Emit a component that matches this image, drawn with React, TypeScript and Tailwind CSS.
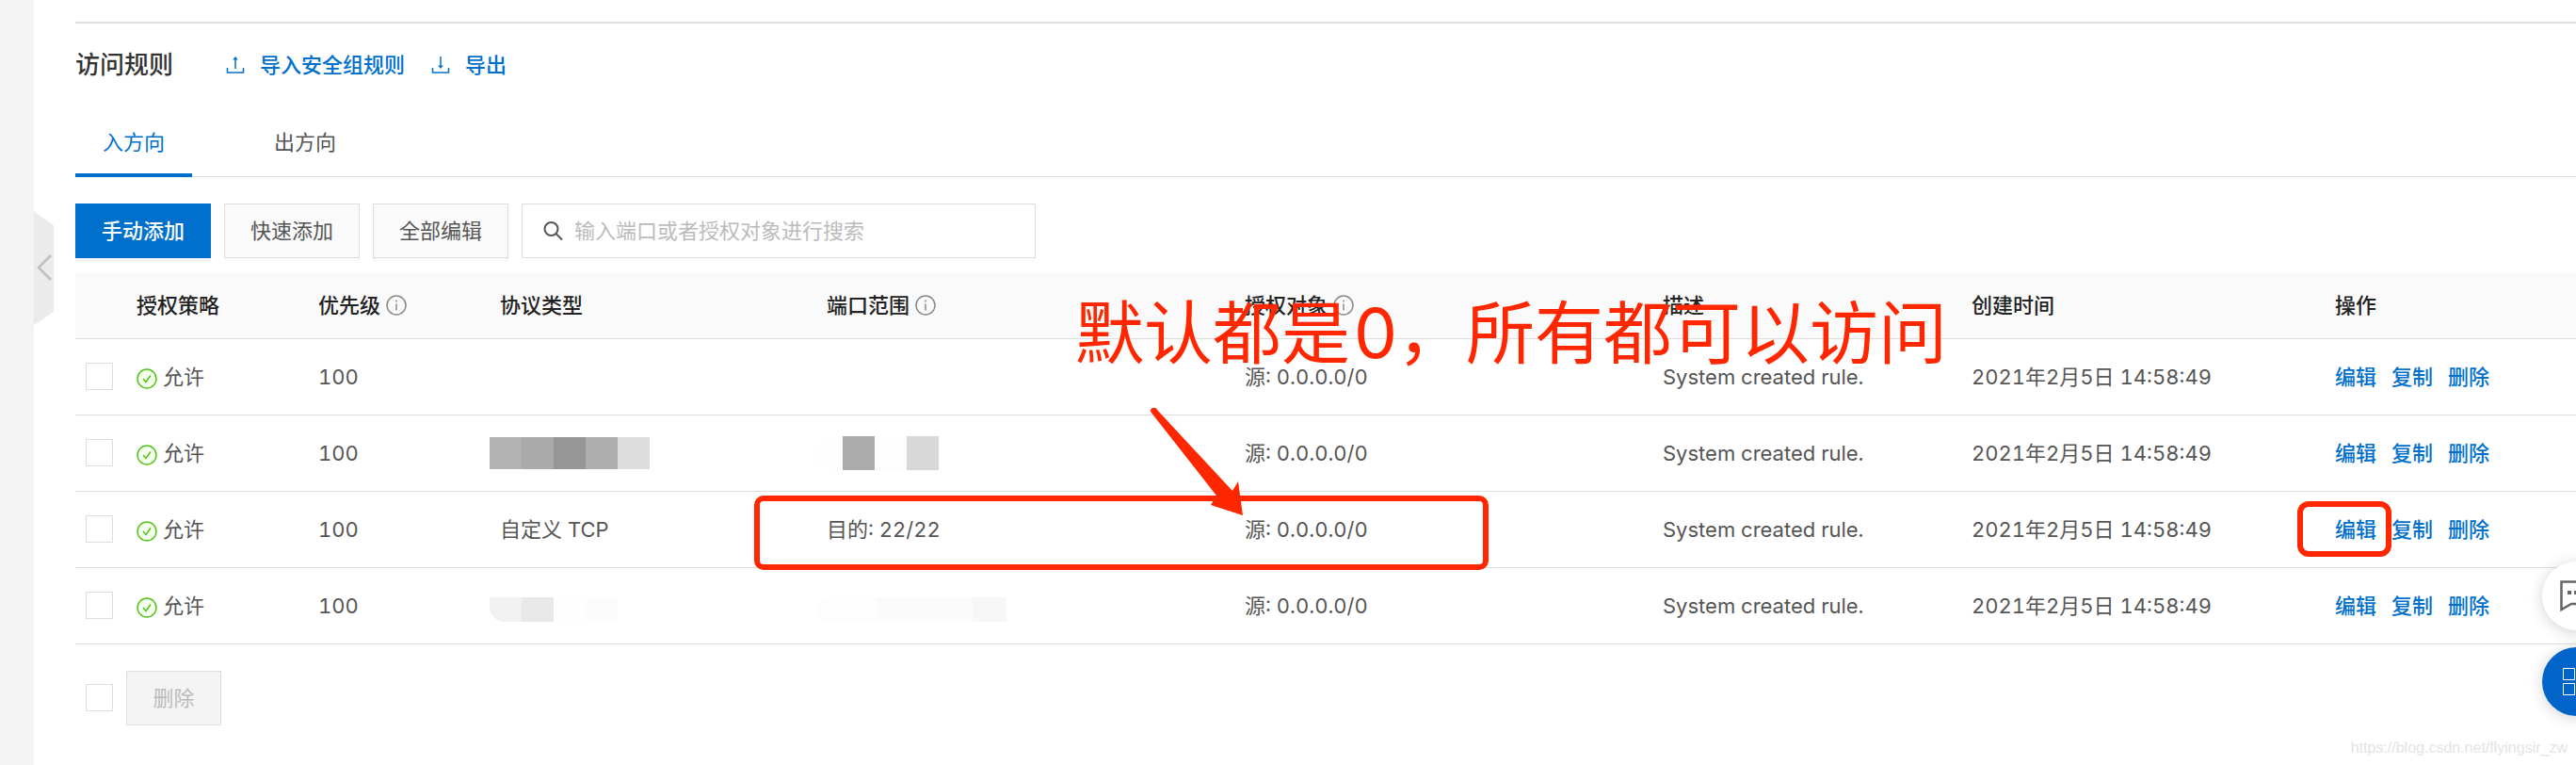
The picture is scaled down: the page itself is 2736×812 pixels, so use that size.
import { useState } from "react";

type Rule = { id: number; protocol: React.ReactNode; port: React.ReactNode };

const LATIN_CJK = "font-['Inter','Noto_Sans_CJK_SC',sans-serif]";

const UploadIcon = () => (
  <svg viewBox="0 0 20 20" className="h-5 w-5" fill="none" stroke="currentColor" strokeWidth="1.500">
    <path d="M1.500 13v5h17v-5M10 14V3" />
    <path d="M10 1L12.800 4.500h-5.600z" fill="currentColor" stroke="none" />
  </svg>
);

const DownloadIcon = () => (
  <svg viewBox="0 0 20 20" className="h-5 w-5" fill="none" stroke="currentColor" strokeWidth="1.500">
    <path d="M1.500 13v5h17v-5M10 1v10" />
    <path d="M10 14L7.200 10.500h5.600z" fill="currentColor" stroke="none" />
  </svg>
);

const InfoIcon = () => (
  <svg viewBox="0 0 22 22" className="h-[22px] w-[22px] text-[#888]" fill="none" stroke="currentColor" strokeWidth="1.500">
    <circle cx="11" cy="11" r="10" />
    <path d="M11 9.500v7M11 5.500v2" />
  </svg>
);

const AllowIcon = () => (
  <svg viewBox="0 0 22 22" className="mt-1 h-[22px] w-[22px]" fill="none" stroke="#52c41a" strokeWidth="1.500">
    <circle cx="11" cy="11" r="10" fill="#f6ffed" />
    <path d="M7 11l3 3.500L15 7.500" />
  </svg>
);

const Checkbox = ({ label }: { label: string }) => (
  <input type="checkbox" aria-label={label} className="block h-[29px] w-[29px] appearance-none border border-[#dedede] bg-white checked:bg-[#0070cc]" />
);

const RULES: Rule[] = [
  { id: 1, protocol: null, port: null },
  {
    id: 2,
    protocol: (
      <div className="-ml-[11px] flex h-[34px]">
        <div className="w-[34px] bg-[#b3b3b3]" />
        <div className="w-[34px] bg-[#aaaaaa]" />
        <div className="w-[34px] bg-[#969696]" />
        <div className="w-[34px] bg-[#aeaeae]" />
        <div className="w-[34px] bg-[#dcdcdc]" />
      </div>
    ),
    port: (
      <div className="-ml-[11px] flex h-9">
        <div className="w-7 rounded-l-xl bg-[#fefefe]" />
        <div className="w-[34px] bg-[#ababab]" />
        <div className="w-[34px] bg-[#fdfdfd]" />
        <div className="w-[34px] bg-[#d8d8d8]" />
      </div>
    ),
  },
  { id: 3, protocol: "自定义 TCP", port: "目的: 22/22" },
  {
    id: 4,
    protocol: (
      <div className="-ml-[11px] mt-2 flex h-[26px]">
        <div className="w-[34px] rounded-bl-2xl bg-[#f1f1f1]" />
        <div className="w-[34px] bg-[#e8e8e8]" />
        <div className="w-[34px] bg-[#fefefe]" />
        <div className="w-[34px] bg-[#fcfcfc]" />
      </div>
    ),
    port: (
      <div className="-ml-[11px] mt-2 flex h-[26px]">
        <div className="w-16 rounded-l-xl bg-[#fdfdfd]" />
        <div className="w-[102px] bg-[#fbfbfb]" />
        <div className="w-9 bg-[#f7f7f7]" />
      </div>
    ),
  },
];

const HEADERS = [
  { title: "授权策略", info: false },
  { title: "优先级", info: true },
  { title: "协议类型", info: false },
  { title: "端口范围", info: true },
  { title: "授权对象", info: true },
  { title: "描述", info: false },
  { title: "创建时间", info: false },
  { title: "操作", info: false },
];

function Annotations() {
  return (
    <div className="pointer-events-none absolute inset-0 overflow-hidden">
      <p className="absolute left-[1142px] top-[300px] whitespace-nowrap text-[73px] leading-[108px] text-[#ff2600]">默认都是<span className="ml-1">0</span>，所有都可以访问</p>
      <div className="absolute left-[801px] top-[526px] h-[79px] w-[780px] rounded-[10px] border-6 border-[#ff2600]" />
      <div className="absolute left-[2440px] top-[532px] h-[59px] w-[100px] rounded-xl border-6 border-[#ff2600]" />
      <svg viewBox="0 0 104 120" className="absolute left-[1220px] top-[430px] h-[120px] w-[104px]" fill="#ff2600">
        <path d="M2.500 7.500Q1 3.500 5 3T9 5L89 91L95 81L100 117L66 106L72 96Z" />
      </svg>
    </div>
  );
}

export default function App() {
  const [direction, setDirection] = useState<"in" | "out">("in");
  const [keyword, setKeyword] = useState("");

  const tabClass = (active: boolean) =>
    active
      ? "h-[67px] border-b-4 border-[#0070cc] px-[29px] pb-1 text-[#0070cc]"
      : "h-[67px] border-b-4 border-transparent px-[29px] pb-1 text-[#555]";

  return (
    <div className={`relative flex min-h-screen w-full overflow-hidden bg-white text-[22px] leading-8 text-[#555] ${LATIN_CJK}`}>
      <aside className="relative w-9 shrink-0 bg-[#f4f4f4]">
        <button type="button" aria-label="收起" className="absolute left-9 top-[225px]">
          <svg viewBox="0 0 22 120" className="h-[120px] w-[22px]" fill="none">
            <path d="M0 0L21 14V106L0 120Z" fill="#ebebeb" />
            <path d="M18 46L5 59L18 72" stroke="#bfbfbf" strokeWidth="2.500" />
          </svg>
        </button>
      </aside>

      <main className="min-w-0 flex-1 pl-11 pt-[23px]">
        <section className="border-t-2 border-[#dedede] pt-7">
          <div className="flex h-8 items-center">
            <h2 className="text-[26px] font-medium text-[#333]">访问规则</h2>
            <a href="#import" className="ml-14 flex items-center gap-4 font-medium text-[#0070cc]"><UploadIcon />导入安全组规则</a>
            <a href="#export" className="ml-7 flex items-center gap-4 font-medium text-[#0070cc]"><DownloadIcon />导出</a>
          </div>

          <div role="tablist" className="mt-9 flex gap-[58px] shadow-[inset_0_-3px_0_-2px_#dedede]">
            <button type="button" role="tab" aria-selected={direction === "in"} onClick={() => setDirection("in")} className={tabClass(direction === "in")}>入方向</button>
            <button type="button" role="tab" aria-selected={direction === "out"} onClick={() => setDirection("out")} className={tabClass(direction === "out")}>出方向</button>
          </div>

          <div className="mt-7 flex h-[58px] gap-[14px]">
            <button type="button" className="w-36 bg-[#0070cc] font-medium text-white shadow-[0_4px_0_#f4f4f4]">手动添加</button>
            <button type="button" className="w-36 border border-[#dedede] bg-[#fafafa] shadow-[0_4px_0_#fafafa]">快速添加</button>
            <button type="button" className="w-36 border border-[#dedede] bg-[#fafafa] shadow-[0_4px_0_#fafafa]">全部编辑</button>
            <label className="flex w-[546px] items-center gap-3 border border-[#dedede] pl-[22px]">
              <svg viewBox="0 0 21 21" className="h-[21px] w-[21px] shrink-0" fill="none" stroke="#555" strokeWidth="2">
                <circle cx="8.500" cy="8" r="7" />
                <path d="M13.500 13L20 19.500" />
              </svg>
              <input value={keyword} onChange={e => setKeyword(e.target.value)} placeholder="输入端口或者授权对象进行搜索" aria-label="搜索"
                className="min-w-0 flex-1 placeholder:text-[#bbb] focus:outline-none" />
            </label>
          </div>

          <table className="mt-[15px] w-full table-fixed border-collapse text-left tabular-nums">
            <colgroup>
              <col className="w-[65px]" />
              <col className="w-[193px]" />
              <col className="w-[193px]" />
              <col className="w-[347px]" />
              <col className="w-[444px]" />
              <col className="w-[444px]" />
              <col className="w-[328px]" />
              <col className="w-[386px]" />
              <col />
            </colgroup>
            <thead>
              <tr className="h-[70px] border-b border-[#dedede] bg-[#fafafa] text-[#222]">
                <th />
                {HEADERS.map(h => (
                  <th key={h.title} className="font-medium">
                    <span className="flex items-center gap-[6px]">{h.title}{h.info && <InfoIcon />}</span>
                  </th>
                ))}
              </tr>
            </thead>
            <tbody>
              {RULES.map(rule => (
                <tr key={rule.id} className="h-[81px] border-b border-[#dedede]">
                  <td className="pl-[11px]"><Checkbox label={`选择规则 ${rule.id}`} /></td>
                  <td><span className="flex items-center gap-[6px]"><AllowIcon />允许</span></td>
                  <td>100</td>
                  <td>{rule.protocol}</td>
                  <td>{rule.port}</td>
                  <td>源: 0.0.0.0/0</td>
                  <td>System created rule.</td>
                  <td>2021年2月5日 14:58:49</td>
                  <td>
                    <span className="flex gap-4 font-medium text-[#0070cc]">
                      <a href="#edit">编辑</a>
                      <a href="#copy">复制</a>
                      <a href="#delete">删除</a>
                    </span>
                  </td>
                </tr>
              ))}
            </tbody>
          </table>

          <div className="mt-7 flex items-center gap-[14px] pl-[11px]">
            <Checkbox label="全选" />
            <button type="button" disabled className="h-[58px] w-[101px] border border-[#dedede] bg-[#f4f4f4] text-[#bbb]">删除</button>
          </div>
        </section>
      </main>

      <button type="button" aria-label="反馈" className="absolute -right-[37px] top-[596px] h-[73px] w-[73px] rounded-full bg-white pl-[19px] shadow-[0_2px_16px_rgba(0,0,0,0.18)]">
        <svg viewBox="0 0 36 34" className="h-[34px] w-9" fill="none" stroke="#666" strokeWidth="2.500">
          <path d="M1.500 1.500H34V25H12L1.500 31Z" />
          <path d="M8 13h4M15 13h4M22 13h4" strokeWidth="4" />
        </svg>
      </button>
      <button type="button" aria-label="应用" className="absolute -right-[37px] top-[687px] h-[73px] w-[73px] rounded-full bg-[#0064c8] pl-[22px] shadow-[0_2px_16px_rgba(0,0,0,0.18)]">
        <svg viewBox="0 0 30 30" className="h-[30px] w-[30px]" fill="none" stroke="#fff">
          <path d="M.5.5h12v12H.5zM16.500.5h12v12h-12zM.5 16.500h12v12H.5zM16.500 16.500h12v12h-12z" />
        </svg>
      </button>

      <Annotations />
      <p className="absolute bottom-[2px] right-[9px] font-['Liberation_Sans',sans-serif] text-base leading-8 text-[#e4e4e4]">https://blog.csdn.net/flyingsir_zw</p>
    </div>
  );
}
